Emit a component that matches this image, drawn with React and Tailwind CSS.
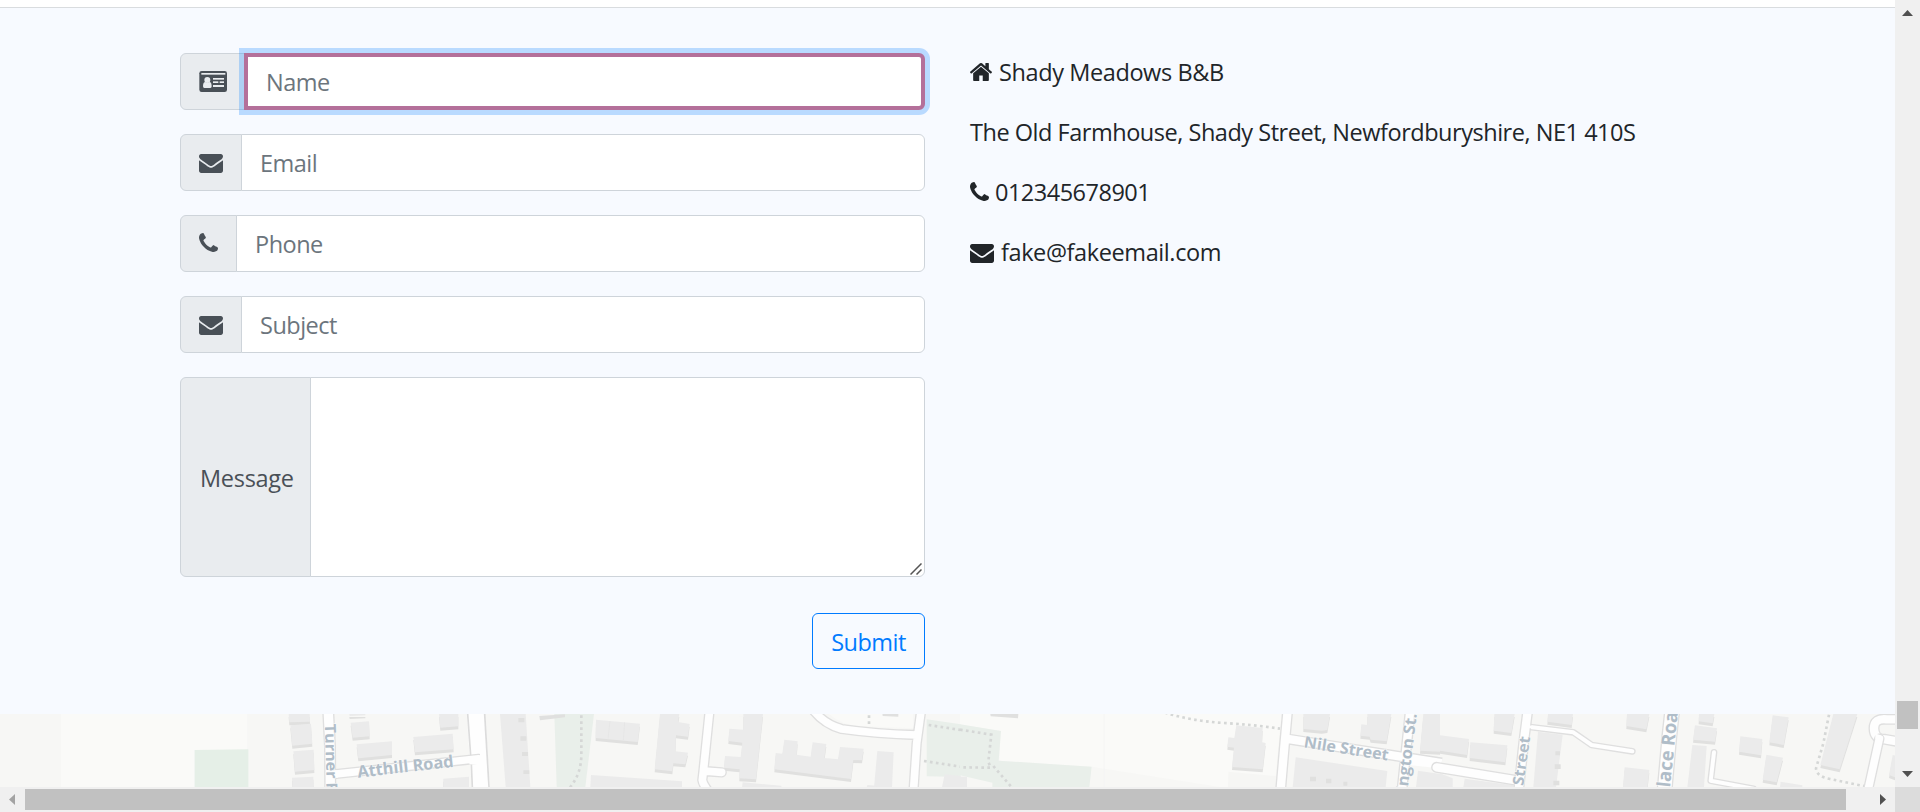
const PHONE = "M1600 1240q0 27-10 70.5t-21 68.5q-21 50-122 106-94 51-186 51-27 0-53-3.5t-57.5-12.5-47-14.5-55.5-20.5-49-18q-98-35-175-83-127-79-264-216t-216-264q-48-77-83-175-3-9-18-49t-20.5-55.5-14.5-47-12.5-57.5-3.5-53q0-92 51-186 56-101 106-122 25-11 68.5-21t70.5-10q14 0 21 3 18 6 53 76 11 19 30 54t35 63.5 31 53.5q3 4 17.5 25t21.5 35.5 7 28.5q0 20-28.5 50t-62 55-62 53-28.5 46q0 9 5 22.5t8.5 20.5 14 24 11.5 19q76 137 174 235t235 174q2 1 19 11.5t24 14 20.5 8.5 22.5 5q18 0 46-28.5t53-62 55-62 50-28.5q14 0 28.5 7t35.5 21.5 25 17.5q25 15 53.5 31t63.5 35 54 30q70 35 76 53 3 7 3 21z";
const ENVELOPE = "M1792 710v794q0 66-47 113t-113 47h-1472q-66 0-113-47t-47-113v-794q44 49 101 87 362 246 497 345 57 42 92.5 65.5t94.5 48 110 24.5h2q51 0 110-24.5t94.5-48 92.5-65.5q170-123 498-345 57-39 100-87zm0-294q0 79-49 151t-122 123q-376 261-468 325-10 7-42.5 31t-54 38.5-52 32.5-57.5 27-50 9h-2q-23 0-50-9t-57.5-27-52-32.5-54-38.5-42.5-31q-91-64-262-182.5t-205-142.5q-62-42-117-115.5t-55-136.5q0-78 41.5-130t118.5-52h1472q65 0 112.5 47t47.5 113z";
const HOME = "M1472 992v480q0 26-19 45t-45 19h-384v-384h-256v384h-384q-26 0-45-19t-19-45v-480q0-1 .5-3t.5-3l575-474 575 474q1 2 1 6zm223-69l-62 74q-8 9-21 11h-3q-13 0-21-7l-692-577-692 577q-12 8-24 7-13-2-21-11l-62-74q-8-10-7-23.5t11-21.5l719-599q32-26 76-26t76 26l244 204v-195q0-14 9-23t23-9h192q14 0 23 9t9 23v408l219 182q10 8 11 21.5t-7 23.5z";

function EnvelopeIcon() {
  return (
    <svg className="h-[19px] w-6 shrink-0 translate-y-px fill-current" viewBox="0 256 1792 1408" preserveAspectRatio="none">
      <path d={ENVELOPE} />
    </svg>
  );
}

function PhoneIcon() {
  return (
    <svg className="h-[19px] w-[19px] shrink-0 -translate-y-px fill-current" viewBox="192 128 1408 1408">
      <path d={PHONE} />
    </svg>
  );
}

function HomeIcon() {
  return (
    <svg className="h-[18px] w-[22px] shrink-0 fill-current" viewBox="89 253 1614 1283" preserveAspectRatio="none">
      <path d={HOME} />
    </svg>
  );
}

function CardIcon() {
  return (
    <svg className="h-[21px] w-[27px] shrink-0 overflow-visible" viewBox="0 0 81 63">
      <rect x="1" y="0" width="83" height="63" rx="7" fill="#495057" />
      <g fill="#e9ecef">
        <rect x="7" y="6" width="72" height="5" />
        <circle cx="25" cy="27" r="9" />
        <path d="M12 46q0-13 7-13 6 5 12 0 7 0 7 13 0 5-4 5H16q-4 0-4-5z" />
        <rect x="42" y="21" width="33" height="5" />
        <rect x="42" y="31" width="16" height="5" />
        <rect x="62" y="31" width="13" height="5" />
        <rect x="42" y="42" width="33" height="6" />
      </g>
    </svg>
  );
}

function Field({ icon, placeholder, focused }) {
  return (
    <div className="flex h-[57px]">
      <span className="flex items-center rounded-l-[6px] border border-[#ced4da] bg-[#e9ecef] px-[18px] text-[#495057]">
        {icon}
      </span>
      <input
        type="text"
        placeholder={placeholder}
        className={
          focused
            ? "relative -ml-px min-w-0 flex-1 rounded-r-[6px] border-4 border-[#b4709a] bg-white px-[18px] pt-0.5 tracking-[-0.5px] shadow-[0_0_0_5px_rgba(0,123,255,0.25)] outline-none placeholder:text-[#6c757d] placeholder:opacity-100"
            : "-ml-px min-w-0 flex-1 rounded-r-[6px] border border-[#ced4da] bg-white px-[18px] pt-0.5 tracking-[-0.5px] outline-none placeholder:text-[#6c757d] placeholder:opacity-100"
        }
      />
    </div>
  );
}

/* Street map drawn at three units per pixel. */
function StreetMap() {
  const B = "#ebebeb";
  const S = "#e0e0df";
  const G = "#e9efea";
  const road = (d, w) => (
    <g fill="none" strokeLinejoin="round" strokeLinecap="round">
      <path d={d} stroke="#dfdfdf" strokeWidth={w + 8} />
      <path d={d} stroke="#fefefe" strokeWidth={w} />
    </g>
  );
  const house = (d) => (
    <g>
      <path d={d} fill={S} transform="translate(0 9)" />
      <path d={d} fill={B} />
    </g>
  );
  const dots = (d) => <path d={d} fill="none" stroke="#d5d7d6" strokeWidth="8" strokeDasharray="8 10" />;
  const label = { fill: "#b0bdc8", stroke: "#fbfbfb", strokeWidth: 3, paintOrder: "stroke", fontFamily: "Open Sans, sans-serif", fontWeight: 700, letterSpacing: "0" };
  return (
    <svg className="block h-[73px] w-full" viewBox="0 0 5685 219" preserveAspectRatio="none">
      <rect width="5685" height="219" fill="#f7f7f5" />
      <g transform="translate(0 -42)">
        <path d="M183 42H742V150H584V261H183z" fill="#fafaf8" />
        <path d="M584 150L745 148V261H584z" fill="#e5efe7" />
        <path d="M1400 42H1455L1470 261H1415z" fill="#fefefe" />
        {house("M866 42H929L930 65L868 67z")}
        {house("M871 76L933 71L937 131L877 137z")}
        {house("M880 154L941 149L943 210L885 215z")}
        {house("M876 233L940 230L941 262H878z")}
        {house("M1048 42H1096V46L1049 48z")}
        {house("M1052 68L1107 64L1109 109L1058 113z")}
        {house("M1070 133L1176 124V165L1075 175z")}
        {house("M1240 111L1358 101L1361 148L1245 157z")}
        {house("M1317 42H1375V79L1321 83z")}
        {house("M1330 236L1407 230V262H1330z")}
        {road("M984 20L990 140L991 280", 28)}
        {road("M1008 222L1436 176", 22)}
        <path d="M1014 211V233H984V211z" fill="#fefefe" />
        <path d="M1403 42L1412 166M1414 193L1417 261" fill="none" stroke="#dcdcdc" strokeWidth="5" />
        <path d="M1408 168H1452V193H1408z" fill="#fefefe" />
        <text {...label} transform="translate(974 72) rotate(88)" fontSize="46" textLength="164" lengthAdjust="spacingAndGlyphs">Turner</text>
        <text {...label} transform="translate(979 248) rotate(88)" fontSize="46">R</text>
        <text {...label} transform="translate(1074 233) rotate(-6.5)" fontSize="50" textLength="290" lengthAdjust="spacingAndGlyphs">Atthill Road</text>
      </g>
      <g transform="translate(1440 -42)">
        <path d="M0 42H14L28 261H0z" fill="#fefefe" />
        <path d="M14 42L27 261" stroke="#dcdcdc" strokeWidth="5" />
        <path d="M223 42H342L316 261H230z" fill={G} />
        {dots("M304 46V160Q305 220 270 262")}
        <path d="M60 42H137L151 261H77z" fill={B} />
        <path d="M115 54h18v13h-18zM121 109h18v13h-18zM126 156h18v12h-18zM130 211h18v11h-18z" fill={S} />
        <path d="M178 48L255 43V52L180 61z" fill={S} />
        {house("M348 59L480 71L473 126L347 114z")}
        <path d="M390 63L384 116M434 67L430 121" stroke="#e4e4e4" strokeWidth="2" />
        {house("M540 42H598L594 66L629 72L624 110L588 106L586 154L624 158L616 193L580 190L577 214L524 208z")}
        <path d="M333 225L606 244V262H331z" fill={B} />
        {house("M754 40L792 42H849L828 238L778 235L779 208L732 203L735 168L782 171L787 128L745 123L748 86L790 89V42z")}
        {house("M887 159L907 161L913 119L953 124L950 164L992 170L998 127L1039 132L1033 174L1074 178L1080 141L1151 146L1146 181L1120 180L1113 237L883 208z")}
        <path d="M1192 153L1241 157L1236 262H1182z" fill={B} />
        <path d="M788 247L904 257V262H786zM1162 255L1190 257V262H1160z" fill={B} />
        <path d="M1046 42H1300V85L1140 78Q1090 78 1046 42z" fill="#fafaf8" />
        <path d="M1207 40H1255V50L1208 48z" fill={S} />
        {dots("M1167 46V80")}
        <path d="M1340 58L1442 73V231L1340 229z" fill={G} />
        {dots("M1346 75L1442 90")}
        {dots("M1332 183L1442 200")}
        <path d="M1394 223L1442 228V262H1386z" fill={B} />
        <g fill="none" strokeLinejoin="round" strokeLinecap="round">
          <path d="M690 20L670 214L667 240Q668 250 682 270M672 213L725 217" stroke="#dfdfdf" strokeWidth="31" />
          <path d="M690 20L670 214L667 240Q668 250 682 270M672 213L725 217" stroke="#fefefe" strokeWidth="23" />
          <path d="M1001 32Q1034 73 1085 87Q1190 102 1310 105M1325 20L1310 130L1300 280" stroke="#dfdfdf" strokeWidth="31" />
          <path d="M1001 32Q1034 73 1085 87Q1190 102 1310 105M1325 20L1310 130L1300 280" stroke="#fefefe" strokeWidth="23" />
        </g>
      </g>
      <g transform="translate(2880 -42)">
        <path d="M0 42H964L944 261H780L395 200L118 182L122 93L0 73z" fill="#fafaf8" />
        <path d="M433 42V261" stroke="#f5f5f4" strokeWidth="2" />
        <path d="M805 215L948 228V261H804z" fill="#f6f6f4" />
        <path d="M0 73L123 93L116 182L395 200L388 261H97V248L0 226z" fill={G} />
        <path d="M91 42H175L174 55L92 49z" fill={S} />
        {dots("M0 89L94 104L85 185L92 203L0 202")}
        {dots("M100 198L155 262")}
        {dots("M615 38Q690 62 790 69Q880 74 960 86")}
        <path d="M0 230H21V261H0z" fill={B} />
        {house("M829 76L908 84L906 127L917 129L908 208L816 201L822 143L802 140L805 112L823 114z")}
        {house("M1030 42H1110L1102 90L1085 92L1030 87z")}
        {house("M1222 42H1294L1280 124L1232 119L1229 110L1201 107L1204 73L1222 75z")}
        {house("M1390 42H1440V155L1380 152z")}
        <path d="M1007 172L1282 213L1277 262H998z" fill={B} />
        <path d="M1050 230h18v14h-18zM1098 236h16v14h-16zM1150 245h12v12h-12z" fill={S} />
        <path d="M1374 212L1442 222V262H1368z" fill={B} />
        <g fill="none" strokeLinejoin="round">
          <path d="M1352 20L1325 280M990 118L1445 189M984 20L974 130L961 280" stroke="#dfdfdf" strokeWidth="33" />
          <path d="M1352 20L1325 280M978 116L1445 189M984 20L974 130L961 280" stroke="#fefefe" strokeWidth="25" />
        </g>
        <path d="M1340 180L1450 194V206L1340 194z" fill="#fefefe" />
        <text {...label} transform="translate(1030 142) rotate(9)" fontSize="48" textLength="256" lengthAdjust="spacingAndGlyphs">Nile Street</text>
        <text {...label} transform="translate(1342 275) rotate(-83)" fontSize="48" textLength="235" lengthAdjust="spacingAndGlyphs">ington St.</text>
      </g>
      <g transform="translate(4320 -72)">
        {house("M0 136L87 147L81 195L0 182z")}
        {house("M91 157L202 166L196 217L89 204z")}
        {house("M163 72H224L214 129L161 122z")}
        <path d="M0 250L38 265V292H0zM74 266L220 286V292H70z" fill={B} />
        {house("M324 72H399L395 105L322 95z")}
        <path d="M294 125L368 134L348 292H280z" fill={B} />
        <path d="M346 184h14v12h-14zM344 223h18v14h-18zM340 272h18v14h-18z" fill={S} />
        {house("M561 72H628L619 118L559 108z")}
        {house("M554 232L628 240L622 292H549z")}
        {house("M777 72H823L818 100L776 94z")}
        {house("M765 106L831 115L825 155L759 149z")}
        <path d="M757 165L800 168L792 292H742z" fill={B} />
        {house("M901 139L967 147L963 196L897 185z")}
        {house("M998 76L1046 82L1031 165L988 157z")}
        {house("M979 194L1029 203L1010 277L968 269z")}
        <path d="M1022 275L1087 286V292H1020z" fill={B} />
        {house("M1180 72H1252L1199 238L1141 225z")}
        {house("M1358 195L1366 197V262L1347 255z")}
        {dots("M1167 74L1150 160L1128 235Q1130 260 1170 267L1280 290")}
        {road("M-10 232L234 272", 25)}
        {road("M270 111L400 127L455 165L577 184", 12)}
        {road("M266 40L252 150L236 300", 25)}
        <path d="M262 106L290 109V117L262 114z" fill="#fefefe" />
        {road("M700 30L688 140L672 320", 40)}
        {road("M822 187L812 272L940 296", 12)}
        {road("M1380 88H1340Q1302 84 1302 115Q1302 148 1336 148L1380 156", 25)}
        {road("M1318 146L1282 310", 23)}
        <path d="M1306 130L1330 140L1324 160L1306 146z" fill="#fefefe" />
        <text {...label} transform="translate(250 288) rotate(-82)" fontSize="46" textLength="148" lengthAdjust="spacingAndGlyphs">Street</text>
        <text {...label} transform="translate(690 293) rotate(-84)" fontSize="56" textLength="262" lengthAdjust="spacingAndGlyphs">lace Road</text>
      </g>
    </svg>
  );
}

function Contact() {
  return (
    <section className="flex h-[707px] border-t border-[#d9dcdf] bg-[#f7faff] pt-[45px] pl-[180px]">
      <form className="flex w-[745px] flex-col gap-6">
        <Field icon={<CardIcon />} placeholder="Name" focused />
        <Field icon={<EnvelopeIcon />} placeholder="Email" />
        <Field icon={<PhoneIcon />} placeholder="Phone" />
        <Field icon={<EnvelopeIcon />} placeholder="Subject" />
        <div className="relative flex h-[200px]">
          <span className="flex w-[131px] shrink-0 items-center rounded-l-[6px] border border-[#ced4da] bg-[#e9ecef] pt-1 pl-[19px] tracking-[-0.3px] text-[#495057]">
            Message
          </span>
          <textarea className="-ml-px min-w-0 flex-1 resize-none rounded-r-[6px] border border-[#ced4da] bg-white outline-none" />
          <svg className="absolute right-[3px] bottom-[2px] h-3 w-3" viewBox="0 0 12 12" stroke="#555" strokeWidth="1.5">
            <path d="M0.5 11.5L11.5 0.5M6.5 11.5L11.5 6.5" />
          </svg>
        </div>
        <button
          type="button"
          className="mt-3 flex h-14 w-[113px] items-center justify-center self-end rounded-[6px] border border-[#007bff] pt-1 tracking-[-0.5px] text-[#007bff]"
        >
          Submit
        </button>
      </form>
      <div className="ml-[45px] flex flex-col gap-6 pt-px leading-9 tracking-[-0.4px] text-[#212529]">
        <p className="flex items-center gap-[7px]">
          <HomeIcon />
          Shady Meadows B&amp;B
        </p>
        <p className="tracking-[-0.47px]">The Old Farmhouse, Shady Street, Newfordburyshire, NE1 410S</p>
        <p className="flex items-center gap-1.5 tracking-[-0.5px]">
          <PhoneIcon />
          012345678901
        </p>
        <p className="flex items-center gap-[7px]">
          <EnvelopeIcon />
          fake@fakeemail.com
        </p>
      </div>
    </section>
  );
}

export default function App() {
  return (
    <div className="flex h-[812px] w-[1920px] flex-col overflow-hidden bg-white font-['Open_Sans','Noto_Sans',sans-serif] text-[23.5px]">
      <div className="flex h-[787px]">
        <main className="flex w-[1895px] flex-col pt-[7px]">
          <Contact />
          <StreetMap />
        </main>
        <div className="flex w-[25px] flex-col items-center bg-[#f0f0f0] pt-2.5">
          <svg className="h-1.5 w-[11px] fill-[#505050]" viewBox="0 0 11 6">
            <path d="M0 6L5.5 0L11 6z" />
          </svg>
          <div className="mt-[685px] h-7 w-[21px] bg-[#c1c1c1]" />
          <svg className="mt-[42px] h-1.5 w-[11px] fill-[#505050]" viewBox="0 0 11 6">
            <path d="M0 0L5.5 6L11 0z" />
          </svg>
        </div>
      </div>
      <div className="flex h-[25px] bg-[#f0f0f0]">
        <div className="flex w-[1895px] items-center">
          <svg className="ml-[9px] h-[11px] w-1.5 fill-[#a3a3a3]" viewBox="0 0 6 11">
            <path d="M6 0L0 5.5L6 11z" />
          </svg>
          <div className="ml-2.5 h-[21px] w-[1821px] bg-[#c1c1c1]" />
          <svg className="ml-[34px] h-[11px] w-1.5 fill-[#505050]" viewBox="0 0 6 11">
            <path d="M0 0L6 5.5L0 11z" />
          </svg>
        </div>
        <div className="w-[25px] bg-[#dcdcdc]" />
      </div>
    </div>
  );
}
